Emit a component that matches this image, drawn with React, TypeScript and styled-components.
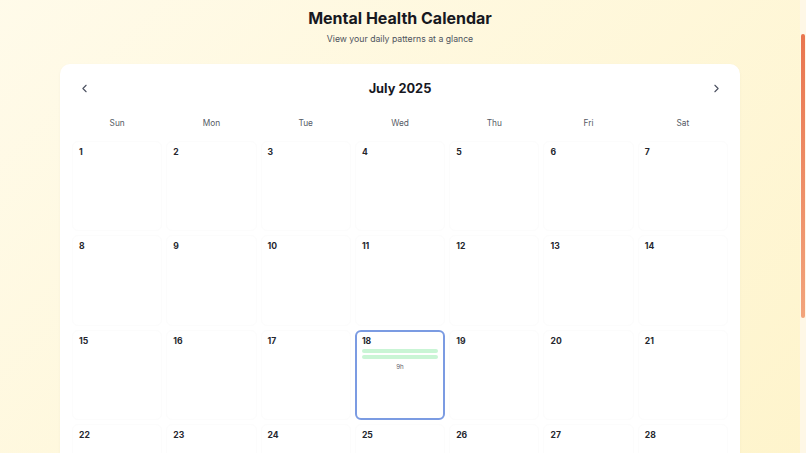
import { useEffect } from 'react';
import styled, { createGlobalStyle } from 'styled-components';
import { ChevronLeft, ChevronRight } from 'lucide-react';

const GlobalStyle = createGlobalStyle`
  html, body {
    margin: 0;
    padding: 0;
  }

  body {
    font-family: Inter, "Noto Sans", "Liberation Sans", sans-serif;
    background: linear-gradient(135deg, #fffbeb 0%, #fef3c7 100%);
    color: #1f2937;
    padding-right: 6px;
  }

  ::-webkit-scrollbar {
    width: 0;
  }
`;

// drawn scrollbar, the headless browser hides the native one
const ScrollTrack = styled.div`
  position: fixed;
  top: 0;
  right: 0;
  width: 6px;
  height: 100vh;
  background: #fef7e6;
`;

const ScrollThumb = styled.div`
  position: absolute;
  top: 34px;
  left: 1px;
  width: 4px;
  height: 284px;
  border-radius: 3px;
  background: linear-gradient(180deg, #e9754f, #f2a47c);
`;

const Page = styled.main`
  padding: 60px 0 48px;
  display: flex;
  flex-direction: column;
  align-items: center;
`;

const Title = styled.h1`
  margin: 0;
  font-size: 16px;
  line-height: 24px;
  font-weight: 700;
  color: #17181f;
`;

const Subtitle = styled.p`
  margin: 2px 0 18px;
  font-size: 8.7px;
  line-height: 14px;
  color: #4d525c;
`;

const Card = styled.section`
  width: 680px;
  box-sizing: border-box;
  padding: 12px;
  background: #ffffff;
  border-radius: 10px;
  box-shadow: 0 1px 3px rgba(0, 0, 0, 0.04);
`;

const NavRow = styled.div`
  height: 24px;
  display: flex;
  align-items: center;
  justify-content: space-between;
  margin-bottom: 16px;
`;

const NavButton = styled.button`
  width: 24px;
  height: 24px;
  padding: 0;
  border: 0;
  background: transparent;
  color: #4b5060;
  display: flex;
  align-items: center;
  justify-content: center;
  cursor: pointer;
`;

const Month = styled.h2`
  margin: 0;
  font-size: 12.8px;
  font-weight: 700;
  color: #17181f;
`;

const Grid = styled.div`
  display: grid;
  grid-template-columns: repeat(7, 1fr);
  gap: 4px;
`;

const WeekHeader = styled(Grid)`
  margin-bottom: 11px;
`;

const WeekDay = styled.div`
  text-align: center;
  font-size: 8.3px;
  line-height: 14px;
  color: #555a64;
`;

const DayCell = styled.div<{ $selected?: boolean }>`
  aspect-ratio: 1;
  box-sizing: border-box;
  padding: ${({ $selected }) => ($selected ? '4px 5px' : '5px 6px')};
  border: ${({ $selected }) => ($selected ? '2px solid #7b9be2' : '1px solid #fcfcfc')};
  border-radius: 6px;
  display: flex;
  flex-direction: column;
`;

const DayNumber = styled.span`
  font-size: 8.6px;
  line-height: 10px;
  font-weight: 700;
  color: #25272e;
`;

const Bars = styled.div`
  margin-top: 3px;
  display: flex;
  flex-direction: column;
  gap: 2px;
`;

const Bar = styled.div`
  height: 4px;
  border-radius: 2px;
  background: #c9f5d5;
`;

const Hours = styled.span`
  margin-top: 4px;
  text-align: center;
  font-size: 6.2px;
  line-height: 8px;
  color: #5f636c;
`;

const weekDays = ['Sun', 'Mon', 'Tue', 'Wed', 'Thu', 'Fri', 'Sat'];
const days = Array.from({ length: 31 }, (_, i) => i + 1);

export default function App() {
  useEffect(() => {
    window.scrollTo(0, 54);
  }, []);

  return (
    <>
      <GlobalStyle />
      <Page>
        <Title>Mental Health Calendar</Title>
        <Subtitle>View your daily patterns at a glance</Subtitle>
        <Card>
          <NavRow>
            <NavButton type="button" aria-label="Previous month">
              <ChevronLeft size={13} strokeWidth={2} />
            </NavButton>
            <Month>July 2025</Month>
            <NavButton type="button" aria-label="Next month">
              <ChevronRight size={13} strokeWidth={2} />
            </NavButton>
          </NavRow>
          <WeekHeader>
            {weekDays.map((d) => (
              <WeekDay key={d}>{d}</WeekDay>
            ))}
          </WeekHeader>
          <Grid>
            {days.map((day) => {
              const selected = day === 18;
              return (
                <DayCell key={day} $selected={selected}>
                  <DayNumber>{day}</DayNumber>
                  {selected && (
                    <>
                      <Bars>
                        <Bar />
                        <Bar />
                      </Bars>
                      <Hours>9h</Hours>
                    </>
                  )}
                </DayCell>
              );
            })}
          </Grid>
        </Card>
      </Page>
      <ScrollTrack>
        <ScrollThumb />
      </ScrollTrack>
    </>
  );
}
